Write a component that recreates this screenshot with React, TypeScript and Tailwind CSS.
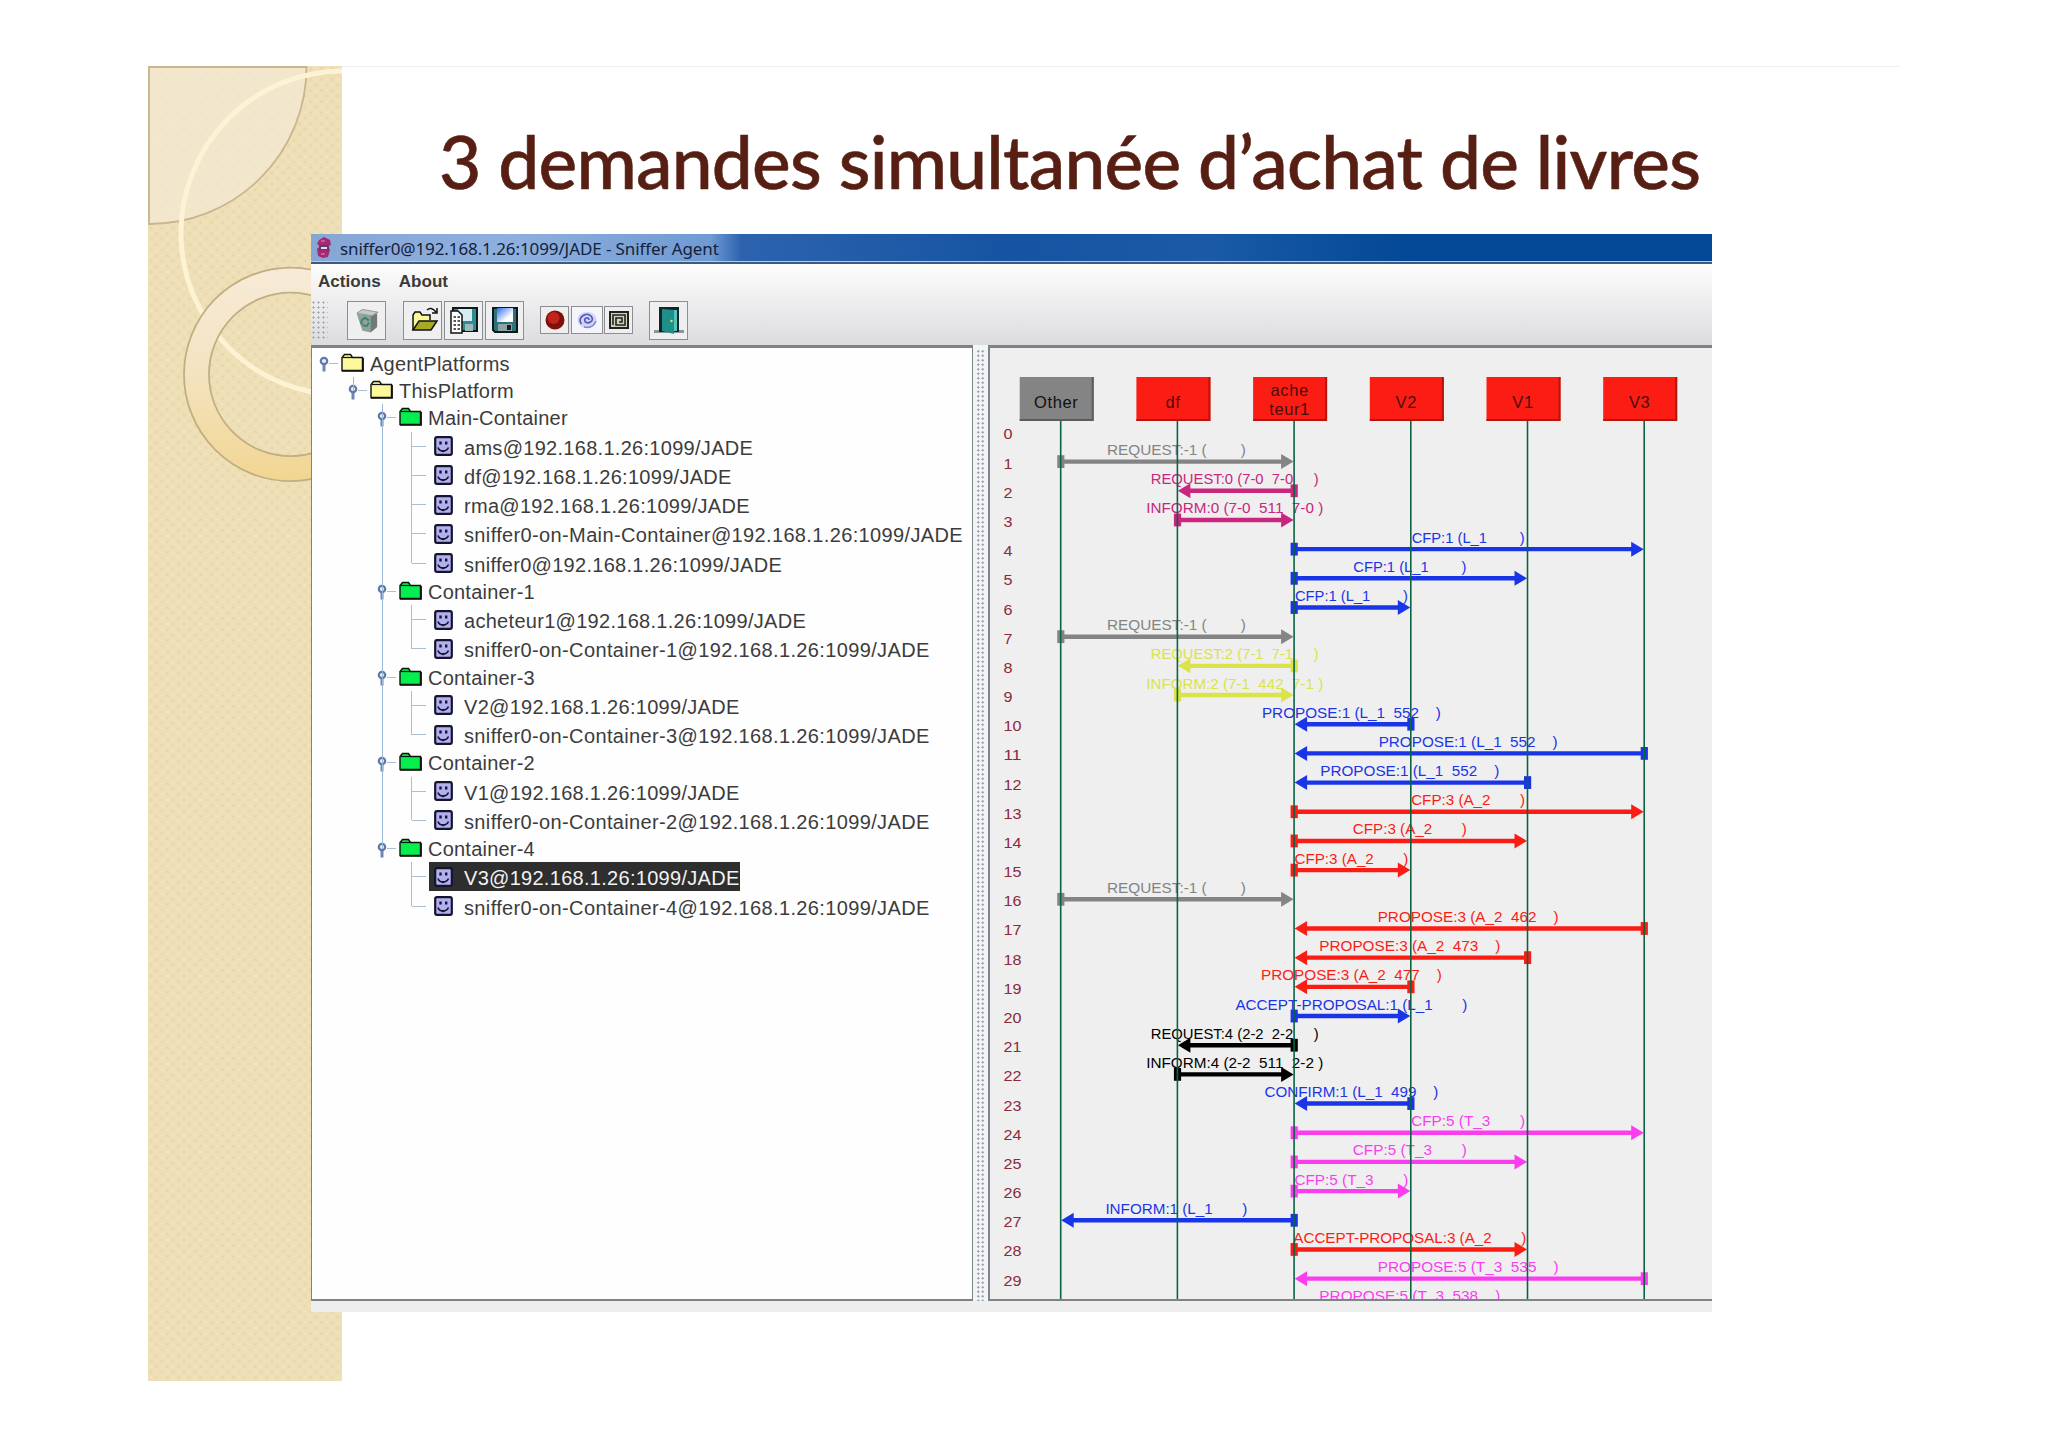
import type { ReactNode } from "react";

type TreeRow = { kind: "root" | "platform" | "container" | "agent"; label: string; last?: boolean; selected?: boolean };
type Message = { from: number; to: number; label: string; width: number; color: string };

const HOST = "@192.168.1.26:1099/JADE";

const rows: TreeRow[] = [
  { kind: "root", label: "AgentPlatforms" },
  { kind: "platform", label: "ThisPlatform" },
  { kind: "container", label: "Main-Container" },
  { kind: "agent", label: "ams" + HOST },
  { kind: "agent", label: "df" + HOST },
  { kind: "agent", label: "rma" + HOST },
  { kind: "agent", label: "sniffer0-on-Main-Container" + HOST },
  { kind: "agent", label: "sniffer0" + HOST, last: true },
  { kind: "container", label: "Container-1" },
  { kind: "agent", label: "acheteur1" + HOST },
  { kind: "agent", label: "sniffer0-on-Container-1" + HOST, last: true },
  { kind: "container", label: "Container-3" },
  { kind: "agent", label: "V2" + HOST },
  { kind: "agent", label: "sniffer0-on-Container-3" + HOST, last: true },
  { kind: "container", label: "Container-2" },
  { kind: "agent", label: "V1" + HOST },
  { kind: "agent", label: "sniffer0-on-Container-2" + HOST, last: true },
  { kind: "container", label: "Container-4", last: true },
  { kind: "agent", label: "V3" + HOST, selected: true },
  { kind: "agent", label: "sniffer0-on-Container-4" + HOST, last: true },
];

const GRAY = "#848484";
const PINK = "#c9267f";
const BLUE = "#1a35e8";
const YELLOW = "#dbe34a";
const RED = "#fb1d14";
const BLACK = "#000000";
const MAGENTA = "#fb3df0";

const OTHER = 0, DF = 1, ACH = 2, V2 = 3, V1 = 4, V3 = 5;

const messages: Message[] = [
  { from: OTHER, to: ACH, label: "REQUEST:-1 (        )", width: 139, color: GRAY },
  { from: ACH, to: DF, label: "REQUEST:0 (7-0  7-0     )", width: 168, color: PINK },
  { from: DF, to: ACH, label: "INFORM:0 (7-0  511  7-0 )", width: 177, color: PINK },
  { from: ACH, to: V3, label: "CFP:1 (L_1        )", width: 113, color: BLUE },
  { from: ACH, to: V1, label: "CFP:1 (L_1        )", width: 113, color: BLUE },
  { from: ACH, to: V2, label: "CFP:1 (L_1        )", width: 113, color: BLUE },
  { from: OTHER, to: ACH, label: "REQUEST:-1 (        )", width: 139, color: GRAY },
  { from: ACH, to: DF, label: "REQUEST:2 (7-1  7-1     )", width: 168, color: YELLOW },
  { from: DF, to: ACH, label: "INFORM:2 (7-1  442  7-1 )", width: 177, color: YELLOW },
  { from: V2, to: ACH, label: "PROPOSE:1 (L_1  552    )", width: 179, color: BLUE },
  { from: V3, to: ACH, label: "PROPOSE:1 (L_1  552    )", width: 179, color: BLUE },
  { from: V1, to: ACH, label: "PROPOSE:1 (L_1  552    )", width: 179, color: BLUE },
  { from: ACH, to: V3, label: "CFP:3 (A_2       )", width: 114, color: RED },
  { from: ACH, to: V1, label: "CFP:3 (A_2       )", width: 114, color: RED },
  { from: ACH, to: V2, label: "CFP:3 (A_2       )", width: 114, color: RED },
  { from: OTHER, to: ACH, label: "REQUEST:-1 (        )", width: 139, color: GRAY },
  { from: V3, to: ACH, label: "PROPOSE:3 (A_2  462    )", width: 181, color: RED },
  { from: V1, to: ACH, label: "PROPOSE:3 (A_2  473    )", width: 181, color: RED },
  { from: V2, to: ACH, label: "PROPOSE:3 (A_2  477    )", width: 181, color: RED },
  { from: ACH, to: V2, label: "ACCEPT-PROPOSAL:1 (L_1       )", width: 232, color: BLUE },
  { from: ACH, to: DF, label: "REQUEST:4 (2-2  2-2     )", width: 168, color: BLACK },
  { from: DF, to: ACH, label: "INFORM:4 (2-2  511  2-2 )", width: 177, color: BLACK },
  { from: V2, to: ACH, label: "CONFIRM:1 (L_1  499    )", width: 174, color: BLUE },
  { from: ACH, to: V3, label: "CFP:5 (T_3       )", width: 114, color: MAGENTA },
  { from: ACH, to: V1, label: "CFP:5 (T_3       )", width: 114, color: MAGENTA },
  { from: ACH, to: V2, label: "CFP:5 (T_3       )", width: 114, color: MAGENTA },
  { from: ACH, to: OTHER, label: "INFORM:1 (L_1       )", width: 142, color: BLUE },
  { from: ACH, to: V1, label: "ACCEPT-PROPOSAL:3 (A_2       )", width: 233, color: RED },
  { from: V3, to: ACH, label: "PROPOSE:5 (T_3  535    )", width: 181, color: MAGENTA },
  { from: V1, to: ACH, label: "PROPOSE:5 (T_3  538    )", width: 181, color: MAGENTA },
];

const agents = [["Other"], ["df"], ["ache", "teur1"], ["V2"], ["V1"], ["V3"]];

// canvas coordinates, origin at the inner corner of the right pane
const lineX = (i: number) => 70.7 + i * 116.7;
const rowY = (i: number) => 113.6 + (i - 1) * 29.18;

function Arrow({ from, to, label, width, color, row }: Message & { row: number }) {
  const a = lineX(from);
  const b = lineX(to);
  const y = rowY(row);
  const dir = b > a ? 1 : -1;
  return (
    <g fill={color}>
      <text
        x={(a + b) / 2 - width / 2 - 1}
        y={y - 6.5}
        fontSize={14.5}
        textLength={width}
        lengthAdjust="spacingAndGlyphs"
        className="whitespace-pre"
      >
        {label}
      </text>
      <path d={`M${a} ${y}H${b - dir * 10}`} stroke={color} strokeWidth={4.4} />
      <rect x={a - 3.5} y={y - 6.4} width={7.2} height={12.8} />
      <path d={`M${b - dir * 0.5} ${y}L${b - dir * 13} ${y - 7.5}V${y + 7.5}Z`} />
    </g>
  );
}

function SequenceCanvas() {
  return (
    <svg width="721" height="951" viewBox="0 0 721 951" className="block font-['Liberation_Sans',sans-serif]">
      {Array.from({ length: 30 }, (_, i) => (
        <text
          key={i}
          x={13.5}
          y={rowY(i) + 7}
          fontSize={14.5}
          fill="#8c2a3c"
          textLength={i > 9 ? 18 : 9}
          lengthAdjust="spacingAndGlyphs"
        >
          {i}
        </text>
      ))}
      {messages.map((m, i) => (
        <Arrow key={i} {...m} row={i + 1} />
      ))}
      {agents.map((name, i) => {
        const x = lineX(i) - 41;
        return (
          <g key={i}>
            <path d={`M${lineX(i)} 73V951`} stroke="#0b6342" strokeWidth={1.6} />
            <rect x={x} y={29} width={74} height={44} fill={i === 0 ? "#848484" : "#fb1d14"} />
            <path d={`M${x} 72H${x + 73}V29`} fill="none" stroke={i === 0 ? "#5c5c5c" : "#b5150f"} strokeWidth={2} />
            {name.map((part, n) => (
              <text
                key={part}
                x={x + 36.5}
                y={name.length > 1 ? 47.5 + n * 19.3 : 60}
                fontSize={16.5}
                textAnchor="middle"
                letterSpacing={0.6}
                fill={i === 0 ? "#111" : "#4a0d0a"}
              >
                {part}
              </text>
            ))}
          </g>
        );
      })}
    </svg>
  );
}

function Knob() {
  return (
    <svg width="10" height="16" viewBox="0 0 10 16" className="mt-[2px] shrink-0">
      <path d="M5 8V15.5" stroke="#6f86b8" strokeWidth="3" />
      <circle cx="5" cy="5" r="3.2" fill="#e8f0fa" stroke="#5f78a8" strokeWidth="2.2" />
    </svg>
  );
}

function Folder({ color }: { color: string }) {
  return (
    <svg width="23" height="19" viewBox="0 0 23 19" className="-mt-[2px] shrink-0">
      <path d="M1 17.5V4.5L3.5 1.5H9.5L11.5 4.5H21.5V17.5Z" fill={color} stroke="#111" strokeWidth="1.4" />
      <path d="M2 4.5H11.5" stroke="#111" strokeWidth="1.2" />
      <path d="M1 17.8H22V5" fill="none" stroke="#111" strokeWidth="1.8" />
    </svg>
  );
}

function Face() {
  return (
    <svg width="19" height="20" viewBox="0 0 19 20" className="shrink-0">
      <rect x="1.2" y="1.2" width="16.6" height="17.6" rx="1.8" fill="#b3b0f0" stroke="#14142e" strokeWidth="2.2" />
      <path d="M6.5 5.5V8.5M12.2 5.5V8.5" stroke="#14142e" strokeWidth="2.4" />
      <path d="M4 11.5Q5 15 9 15T14.5 11.5" fill="none" stroke="#14142e" strokeWidth="1.6" />
      <path d="M6.5 14.2H12L9 16.5Z" fill="#14142e" />
    </svg>
  );
}

function TreeItem({ row, below }: { row: TreeRow; below: boolean }) {
  if (row.kind === "agent") {
    return (
      <div className="flex h-[29.2px]">
        <div className="w-[70px] shrink-0 flex justify-end">{below && <i className="w-px h-full bg-[#9cb8d6]" />}</div>
        <div className="w-[29px] shrink-0 flex justify-end">
          <i className={`w-px bg-[#a9bfd4] ${row.last ? "h-1/2" : "h-full"}`} />
        </div>
        <div className="w-[17px] shrink-0 flex items-center">
          <i className="w-3.5 h-px bg-[#a9bfd4]" />
        </div>
        <div
          className={`flex items-center pl-[5px] ${row.label.length > 40 ? "tracking-[0.36px]" : "tracking-[0.29px]"} ${row.selected ? "bg-[#2e2e2e] text-[#f2f2f2]" : "text-[#3c3c3c]"}`}
        >
          <Face />
          <span className="ml-[11px] pt-[3px] leading-[26px]">{row.label}</span>
        </div>
      </div>
    );
  }
  const indent = { root: "pl-[6px]", platform: "pl-[35px]", container: "pl-[64px]" }[row.kind];
  return (
    <div className={`relative flex h-[27.4px] items-center ${indent} text-[#3c3c3c]`}>
      {row.kind === "container" && (
        <i className={`absolute left-[69px] top-0 w-px bg-[#9cb8d6] ${row.last ? "h-1/2" : "h-full"}`} />
      )}
      {row.kind === "platform" && <i className="absolute left-[40px] top-0 w-px h-1/2 bg-[#9cb8d6]" />}
      <Knob />
      <i className="w-[9px] h-px bg-[#a9bfd4]" />
      <span className="w-[3px]" />
      <Folder color={row.kind === "container" ? "#04ee4e" : "#fdf99a"} />
      <span className="ml-[6px] pt-[1px] leading-[26px]">{row.label}</span>
    </div>
  );
}

function Tool({ children, small }: { children: ReactNode; small?: boolean }) {
  return (
    <div className={`flex items-center justify-center border border-[#8b8f93] bg-[#efefef] ${small ? "h-[28px] w-[29px]" : "size-[39px]"}`}>
      {children}
    </div>
  );
}

function Toolbar() {
  return (
    <div className="flex h-[47px] items-center pb-[3px]">
      <div className="w-[17px] h-[40px] bg-[radial-gradient(#a0a5ad_0.9px,transparent_1.2px)] bg-[size:5px_5px]" />
      <div className="ml-[19px]">
        <Tool>
          <svg width="24" height="27" viewBox="0 0 26 28">
            <path d="M2 7L8 25L17 27L22 8Z" fill="#93a099" />
            <path d="M17 27L24 21V6L17 9Z" fill="#6f7c76" />
            <path d="M2 6L8 2L25 5L18 9Z" fill="#c3cbc7" stroke="#8a958f" />
            <path d="M7 14L11 11L15 14M15 16L13 20L8 19M7 18V14" fill="none" stroke="#2b8a62" strokeWidth="2" />
          </svg>
        </Tool>
      </div>
      <div className="ml-[17px] flex gap-[2px]">
        <Tool>
          <svg width="28" height="28" viewBox="0 0 28 28" className="ml-1">
            <path d="M2 24V9L4 6H9L11 9H19V14" fill="#fbf79a" stroke="#111" strokeWidth="1.5" />
            <path d="M2 24L8 15H26L20 24Z" fill="#a9a823" stroke="#111" strokeWidth="1.5" />
            <path d="M16 4Q20 0 25 6M26 2V7H21" fill="none" stroke="#111" strokeWidth="1.5" />
          </svg>
        </Tool>
        <Tool>
          <svg width="28" height="28" viewBox="0 0 28 28">
            <rect x="3" y="2" width="24" height="23" fill="#2f8c90" stroke="#0c1a1c" strokeWidth="2" />
            <rect x="8" y="3" width="14" height="12" fill="#d7ecf2" />
            <rect x="15" y="18" width="8" height="7" fill="#9fb9bb" />
            <path d="M1 5H8L12 9V27H1Z" fill="#fff" stroke="#111" strokeWidth="1.5" />
            <path d="M3.5 11H6M7.5 11H10M3.5 15H6M7.5 15H10M3.5 19H6M7.5 19H10M3.5 23H6M7.5 23H10" stroke="#222" strokeWidth="1.5" />
          </svg>
        </Tool>
        <Tool>
          <svg width="28" height="28" viewBox="0 0 28 28">
            <defs>
              <linearGradient id="disk" x1="0" y1="0" x2="1" y2="1">
                <stop offset="0" stopColor="#2e6df0" />
                <stop offset="0.7" stopColor="#ffffff" />
              </linearGradient>
            </defs>
            <path d="M2 2H26V26H4L2 24Z" fill="#2c7378" stroke="#0c1a1c" strokeWidth="2" />
            <rect x="6" y="2" width="16" height="14" fill="url(#disk)" />
            <rect x="7" y="18" width="14" height="7" fill="#8fa3a5" />
            <rect x="16" y="19" width="4" height="5" fill="#101c1e" />
          </svg>
        </Tool>
      </div>
      <div className="ml-[16px] flex items-center gap-[1.5px]">
        <Tool small>
          <svg width="20" height="20" viewBox="0 0 20 20">
            <circle cx="10" cy="10" r="9.5" fill="#7d120c" />
            <circle cx="8.5" cy="8" r="6" fill="#c0241a" />
          </svg>
        </Tool>
        <div className="flex h-[28px] w-[32px] items-center justify-center border border-[#8b8f93] bg-[#f4f4fb]">
          <svg width="22" height="20" viewBox="0 0 22 20" fill="none">
            <ellipse cx="11" cy="10" rx="9.5" ry="8" fill="#d0d2f6" />
            <path d="M13 10Q13 7.5 10.5 8T9 11.5Q11 14 14.5 12T15 6Q11 2.5 6.5 6T5.5 14" stroke="#5058b8" strokeWidth="1.6" />
            <path d="M8 17Q17 19 20 11" stroke="#8085d6" strokeWidth="1.5" />
          </svg>
        </div>
        <Tool small>
          <svg width="20" height="18" viewBox="0 0 20 18" fill="none" stroke="#22221c" strokeWidth="1.6">
            <rect x="1" y="1" width="18" height="16" fill="#cfcfbd" strokeWidth="2" />
            <path d="M4 14V4H16V14H7V7H13V11H10" />
          </svg>
        </Tool>
      </div>
      <div className="ml-[16px]">
        <Tool>
          <svg width="30" height="30" viewBox="0 0 30 30">
            <path d="M0 25H30V28H0Z" fill="#8f9496" />
            <path d="M5 27V2H25V27" fill="#10282b" />
            <path d="M8 4L20 5V29L8 26Z" fill="#1f8f8a" />
            <path d="M20 5H23V26H20Z" fill="#53c4bb" />
            <circle cx="17.5" cy="16" r="1.2" fill="#d9e56a" />
          </svg>
        </Tool>
      </div>
    </div>
  );
}

function SnifferWindow() {
  return (
    <div className="flex h-[1078px] w-[1401px] flex-col bg-[#eeeeee]">
      <div className="flex h-[28px] items-center border-b border-[#b9cbe2] bg-[linear-gradient(90deg,#86a6d6_0,#8fb0de_200px,#6f9ad3_400px,#2d63ae_430px,#1554a2_700px,#1a5aa6_900px,#034896_1100px,#034896_1401px)] pl-1">
        <svg width="18" height="23" viewBox="0 0 18 23">
          <path d="M4 4L9 1L15 4L16 9L13 10L15 14L13 21L8 22L3 20L2 13L5 10L2 8Z" fill="#a52a72" />
          <path d="M4 9H14V14H4Z" fill="#58406a" />
          <path d="M6 12H12" stroke="#f0d8e8" strokeWidth="2" />
          <path d="M6 5H10M6 18H10" stroke="#d867a8" strokeWidth="1.5" />
        </svg>
        <span className="ml-[7px] pt-[1px] font-['Noto_Sans',sans-serif] text-[17px] leading-none tracking-[-0.1px] text-[#14213a]">
          sniffer0@192.168.1.26:1099/JADE - Sniffer Agent
        </span>
      </div>
      <div className="h-[83px] border-t-2 border-[#3d5a80] bg-linear-to-b from-[#fdfdfd] to-[#dcdcdf]">
        <div className="flex h-[34px] items-center gap-[18px] pl-[7px] pt-px font-['Liberation_Sans',sans-serif] text-[17.1px] font-bold text-[#3a3a3a]">
          <span>Actions</span>
          <span>About</span>
        </div>
        <Toolbar />
      </div>
      <div className="flex h-[956px]">
        <div className="w-[662px] overflow-hidden border-x-[1.5px] border-b-2 border-t-[3px] border-[#7d8488] bg-[#fefefe] pl-px pt-[1.5px] font-['Liberation_Sans',sans-serif] text-[20px] tracking-[0.22px] whitespace-nowrap">
          {rows.map((row, i) => (
            <TreeItem key={i} row={row} below={i < 17} />
          ))}
        </div>
        <div className="flex w-[15px] justify-center bg-[#f3f4f6] pt-1">
          <div className="h-full w-[9px] bg-[radial-gradient(#8f98a4_0.9px,transparent_1.2px)] bg-[size:4.5px_4.5px]" />
        </div>
        <div className="flex-1 overflow-hidden border-b-2 border-l-2 border-t-[3px] border-[#7d8488] bg-[#efefef]">
          <SequenceCanvas />
        </div>
      </div>
    </div>
  );
}

function Ornament() {
  return (
    <svg width="194" height="1315" viewBox="148 66 194 1315" className="block">
      <defs>
        <pattern id="weave" width="11" height="11" patternUnits="userSpaceOnUse">
          <rect width="11" height="11" fill="#eedfb6" />
          <circle cx="2.5" cy="2.5" r="1.5" fill="#e8d7ac" />
          <circle cx="8" cy="8" r="1.5" fill="#e8d8ae" />
          <circle cx="8" cy="2.5" r="1.2" fill="#f1e4bf" />
          <circle cx="2.5" cy="8" r="1.2" fill="#f1e3bc" />
        </pattern>
        <linearGradient id="ring" x1="0" y1="0" x2="0" y2="1">
          <stop offset="0" stopColor="#f7ebd8" />
          <stop offset="0.5" stopColor="#f4e3c0" />
          <stop offset="1" stopColor="#f1d591" />
        </linearGradient>
      </defs>
      <rect x="148" y="66" width="194" height="1315" fill="url(#weave)" />
      <path d="M149 67H306.5A157 157 0 0 1 149 224Z" fill="#f3ead3" fillOpacity="0.75" stroke="#c9b68d" strokeWidth="1.8" />
      <circle cx="343" cy="233" r="162" fill="none" stroke="#fdf2d4" strokeWidth="5" />
      <path
        fillRule="evenodd"
        d="M184 374.4a106.7 106.7 0 1 0 213.4 0a106.7 106.7 0 1 0 -213.4 0ZM209 374.4a81.7 81.7 0 1 0 163.4 0a81.7 81.7 0 1 0 -163.4 0Z"
        fill="url(#ring)"
        stroke="#c2ae83"
        strokeWidth="1.8"
      />
    </svg>
  );
}

export default function App() {
  return (
    <div className="flex h-[1447px] w-[2048px] overflow-hidden bg-white pl-[148px] pt-[66px]">
      <div className="w-[194px] shrink-0">
        <Ornament />
      </div>
      <div className="relative z-10 -ml-[31px] w-[1589px]">
        <div className="ml-[31px] h-[168px] border-t border-[#efefef]">
          <h1 className="pl-[97px] pt-[46px] font-['Lato',sans-serif] text-[73px] font-medium leading-[96px] tracking-[-0.75px] whitespace-nowrap text-[#571f14] [-webkit-text-stroke:0.6px_#571f14]">
            3 demandes simultanée d’achat de livres
          </h1>
        </div>
        <SnifferWindow />
      </div>
    </div>
  );
}
